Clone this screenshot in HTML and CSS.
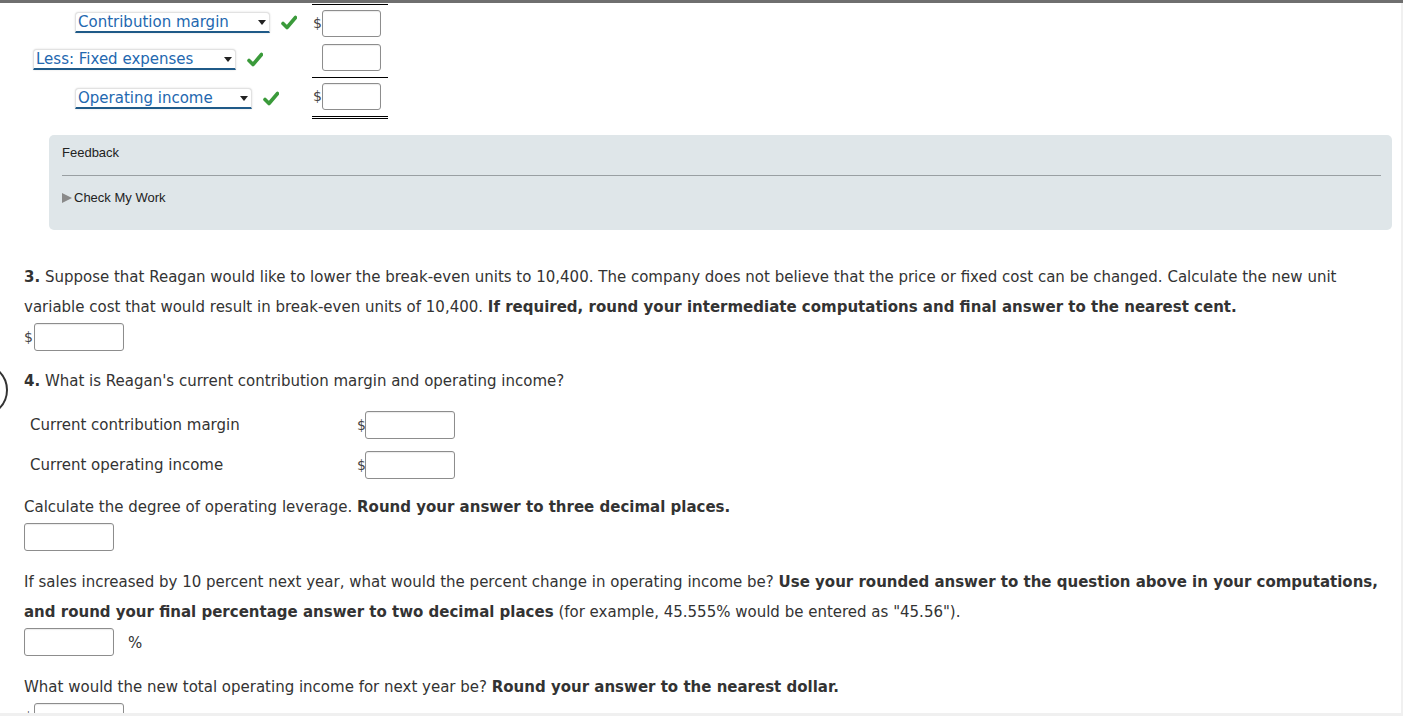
FILE: index.html
```html
<!DOCTYPE html>
<html>
<head>
<meta charset="utf-8">
<link rel="stylesheet" href="styles.css">
</head>
<body>
<div class="topbar"></div>
<div class="stmt">
  <div class="srow">
    <div class="label ind">
      <span class="sel w1">Contribution margin<i class="tri"></i></span>
      <svg class="chk" viewBox="0 0 16 16"><path d="M2 8.5 L6 12.5 L14.5 2.5"/></svg>
    </div>
    <div class="amt amt1"><span class="cur">$</span><span class="box"></span></div>
  </div>
  <div class="srow">
    <div class="label">
      <span class="sel w2">Less: Fixed expenses<i class="tri"></i></span>
      <svg class="chk" viewBox="0 0 16 16"><path d="M2 8.5 L6 12.5 L14.5 2.5"/></svg>
    </div>
    <div class="amt amt2"><span class="cur"></span><span class="box"></span></div>
  </div>
  <div class="srow">
    <div class="label ind">
      <span class="sel w3">Operating income<i class="tri"></i></span>
      <svg class="chk" viewBox="0 0 16 16"><path d="M2 8.5 L6 12.5 L14.5 2.5"/></svg>
    </div>
    <div class="amt amt3"><span class="cur">$</span><span class="box"></span></div>
  </div>
</div>

<div class="feedback">
  <div class="fb-title">Feedback</div>
  <div class="fb-rule"></div>
  <div class="fb-check"><i class="fb-tri"></i>Check My Work</div>
</div>

<div class="main">
  <p class="q"><b>3.</b> Suppose that Reagan would like to lower the break-even units to 10,400. The company does not believe that the price or fixed cost can be changed. Calculate the new unit variable cost that would result in break-even units of 10,400. <b>If required, round your intermediate computations and final answer to the nearest cent.</b></p>
  <div class="ans"><span class="cur">$</span><span class="inp"></span></div>

  <div class="q4wrap">
    <span class="circle"></span>
    <p class="q"><b>4.</b> What is Reagan's current contribution margin and operating income?</p>
  </div>
  <div class="tbl">
    <div class="trow"><span class="tl">Current contribution margin</span><span class="cur">$</span><span class="inp"></span></div>
    <div class="trow"><span class="tl">Current operating income</span><span class="cur">$</span><span class="inp"></span></div>
  </div>

  <p class="q">Calculate the degree of operating leverage. <b>Round your answer to three decimal places.</b></p>
  <div class="ans"><span class="inp"></span></div>

  <p class="q sp">If sales increased by 10 percent next year, what would the percent change in operating income be? <b>Use your rounded answer to the question above in your computations, and round your final percentage answer to two decimal places</b> (for example, 45.555% would be entered as "45.56").</p>
  <div class="ans"><span class="inp"></span><span class="pct">%</span></div>

  <p class="q sp">What would the new total operating income for next year be? <b>Round your answer to the nearest dollar.</b></p>
  <div class="ans"><span class="cur">$</span><span class="inp"></span></div>
</div>
<div class="vstrip"></div>
<div class="hstrip"></div>
</body>
</html>
```

FILE: styles.css
```css
html, body {
  margin: 0;
  padding: 0;
  background: #fff;
  overflow: hidden;
}
body {
  font-family: "DejaVu Sans", Verdana, sans-serif;
  font-size: 15px;
  color: #333;
}
.topbar {
  height: 3px;
  background: #6f6f6f;
}
.stmt {
  margin-top: 1px;
}
.srow {
  display: flex;
  align-items: center;
}
.label {
  width: 312px;
  display: flex;
  align-items: center;
  box-sizing: border-box;
  padding-left: 33px;
}
.label.ind { padding-left: 75px; }
.sel {
  position: relative;
  display: inline-block;
  box-sizing: border-box;
  height: 21px;
  line-height: 18px;
  padding-left: 2px;
  color: #2368b0;
  background: #fff;
  border: 1px solid #e2e2e2;
  border-bottom: 2px solid #1f5a88;
  border-radius: 4px 4px 0 0;
  box-shadow: 0 0 2px rgba(0,0,0,0.15);
  white-space: nowrap;
}
.w1 { width: 195px; }
.w2 { width: 203px; }
.w3 { width: 177px; }
.tri {
  position: absolute;
  right: 3px;
  top: 7px;
  width: 0;
  height: 0;
  border-left: 4px solid transparent;
  border-right: 4px solid transparent;
  border-top: 5px solid #222;
}
.chk {
  width: 16px;
  height: 16px;
  margin-left: 11px;
}
.chk path {
  fill: none;
  stroke: #3a9a3a;
  stroke-width: 3.6;
  stroke-linecap: round;
  stroke-linejoin: round;
}
.amt {
  width: 76px;
  display: flex;
  align-items: flex-start;
}
.amt .cur {
  width: 10px;
  padding-left: 1px;
  box-sizing: border-box;
  line-height: 27px;
}
.amt1 { border-top: 1px solid #000; height: 31px; padding-top: 5px; }
.amt2 { height: 33px; padding-top: 3px; border-bottom: 1px solid #000; }
.amt3 { height: 33px; padding-top: 5px; border-bottom: 3px double #000; }
.box {
  display: block;
  width: 59px;
  height: 27px;
  box-sizing: border-box;
  border: 1px solid #8d8d8d;
  border-radius: 3px;
  box-shadow: inset 0 1px 1px rgba(0,0,0,0.08);
  background: #fff;
}

.feedback {
  margin: 16px 11px 0 49px;
  height: 95px;
  background: #dfe6e9;
  border-radius: 5px;
  padding: 9px 11px 0 13px;
  box-sizing: border-box;
  font-family: "Liberation Sans", Arial, sans-serif;
  font-size: 13px;
  color: #222;
}
.fb-title {
  line-height: 18px;
}
.fb-rule {
  margin-top: 13px;
  border-top: 1px solid #999fa2;
}
.fb-check {
  margin-top: 13px;
  line-height: 18px;
  display: flex;
  align-items: center;
}
.fb-tri {
  width: 0;
  height: 0;
  border-top: 5px solid transparent;
  border-bottom: 5px solid transparent;
  border-left: 10px solid #8a8a8a;
  margin-right: 2px;
}

.main {
  padding: 32px 20px 0 24px;
}
.q {
  margin: 0;
  line-height: 30px;
}
.sp { margin-top: 15px; }
.ans {
  height: 30px;
  display: flex;
  align-items: center;
}
.cur {
  color: #444;
  font-size: 14px;
}
.ans .cur { width: 10px; }
.inp {
  display: block;
  width: 90px;
  height: 28px;
  box-sizing: border-box;
  border: 1px solid #8d8d8d;
  border-radius: 3px;
  box-shadow: inset 0 1px 1px rgba(0,0,0,0.08);
  background: #fff;
}
.pct {
  margin-left: 14px;
  padding-top: 2px;
}
.q4wrap {
  position: relative;
  margin-top: 14px;
}
.circle {
  position: absolute;
  left: -70px;
  top: -3px;
  width: 50px;
  height: 50px;
  border: 2.5px solid #333;
  border-radius: 50%;
}
.tbl {
  margin: 9px 0 7px 6px;
}
.trow {
  height: 40px;
  display: flex;
  align-items: center;
}
.tl {
  width: 327px;
}
.trow .cur { width: 8px; }

.vstrip {
  position: fixed;
  top: 3px;
  right: 0;
  width: 2px;
  bottom: 0;
  background: #f0f0f0;
}
.hstrip {
  position: fixed;
  left: 0;
  right: 0;
  bottom: 0;
  height: 3px;
  background: #f0f0f0;
}
```
